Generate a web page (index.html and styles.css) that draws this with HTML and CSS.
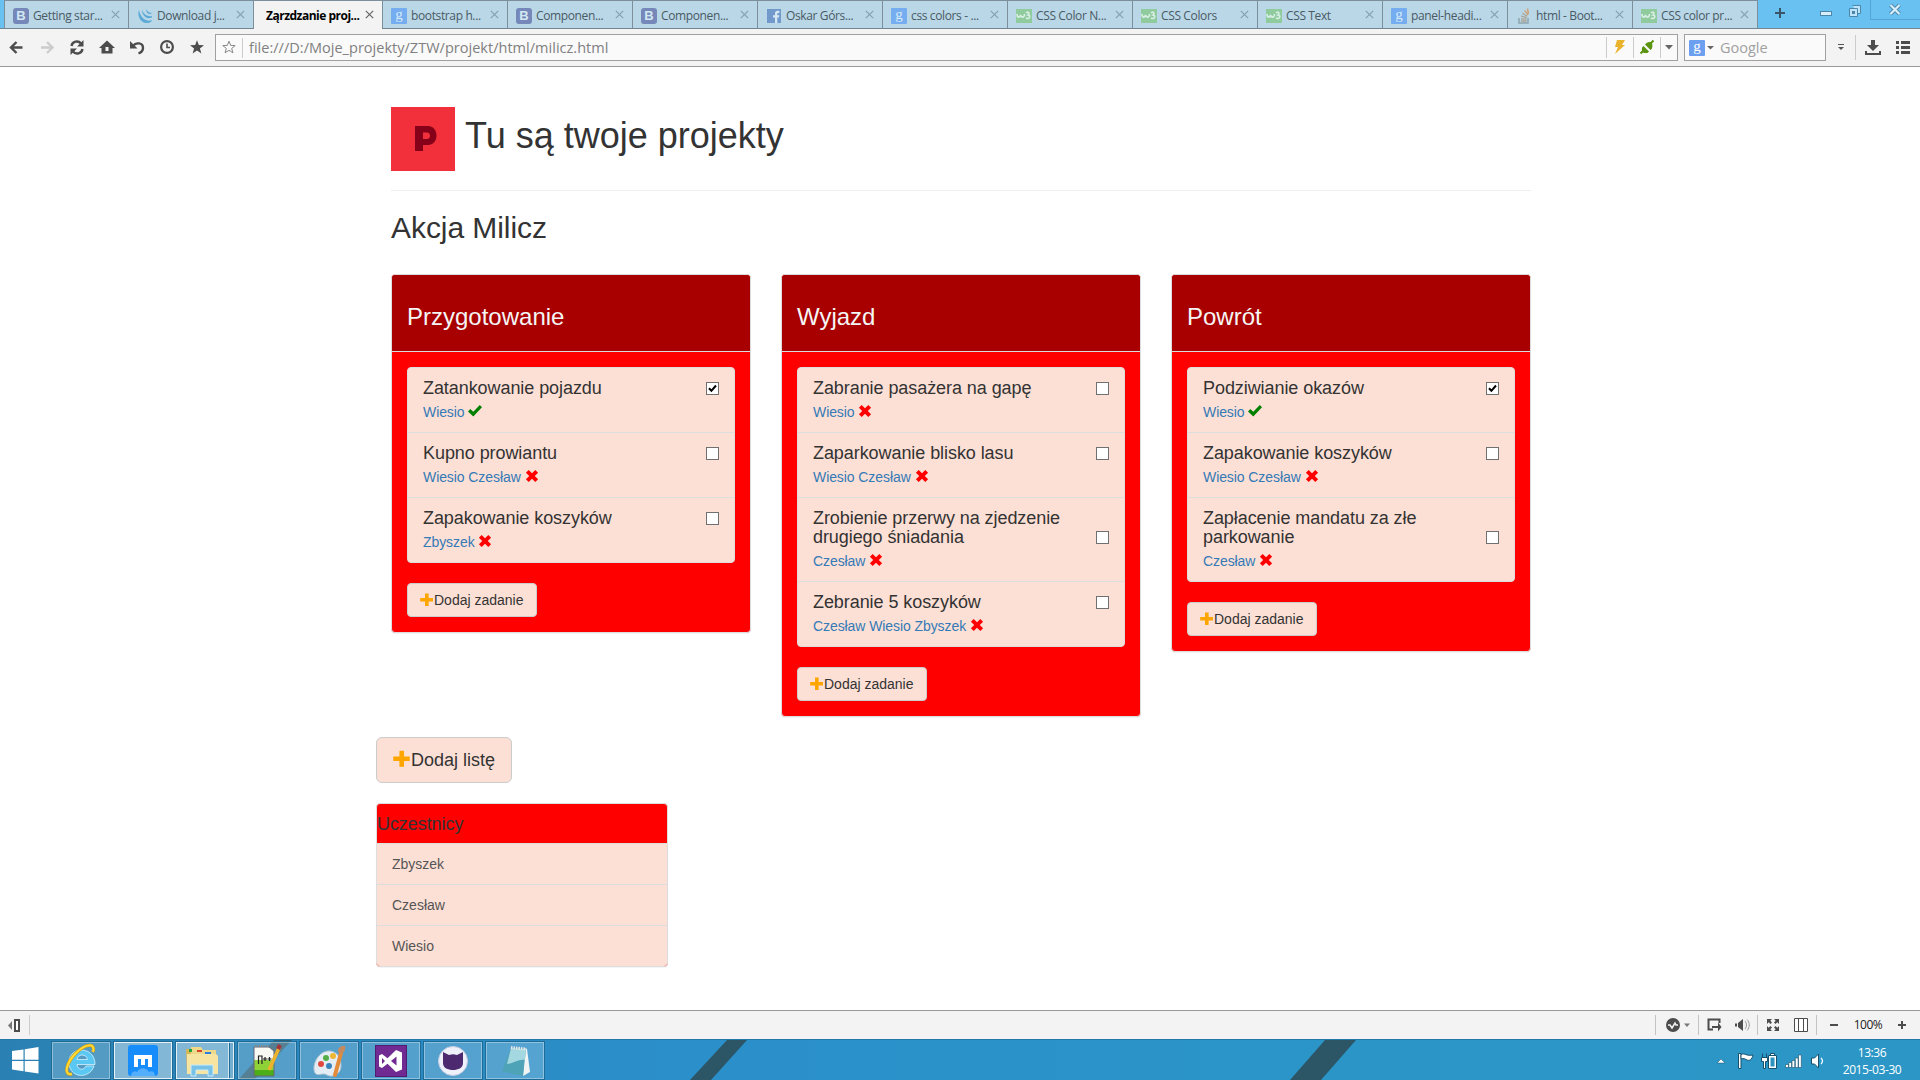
FILE: index.html
```html
<!DOCTYPE html>
<html lang="pl">
<head>
<meta charset="utf-8">
<title>Zarządzanie projektami</title>
<link rel="stylesheet" href="styles.css">
</head>
<body>
<svg class="defs" width="0" height="0">
  <symbol id="fav-jq" viewBox="0 0 16 16"><path d="M2 2C0 7 3 15 10 15c3 0 5-2 5-3-4 2-11 0-13-10zM5 2c0 5 4 9 8 8 2 0 2-1 2-2-4 1-8-1-10-6zM9 1c0 3 2 5 4 5 1 0 2-1 2-1-3 0-5-2-6-4z" fill="#5ba9d6"/></symbol>
  <symbol id="fav-f" viewBox="0 0 16 16"><rect x="1" y="1" width="14" height="14" fill="#7199cc"/><path d="M9 15V9.500H7V7.200h2V5.500C9 3.500 10 2.700 11.600 2.700h1.800v2.200h-1.300c-.6 0-.8.3-.8.9v1.400h2L13 9.500h-1.700V15z" fill="#d5e7f4"/></symbol>
  <symbol id="fav-w3" viewBox="0 0 16 16"><rect y="1" width="16" height="14" fill="#8fcb9d"/><path d="M1 6c0 4 3 4 3.500 1 .5 3 4 3 4-1M10 5c2-2 4 0 2 2 3 0 2 5-2 3" fill="none" stroke="#d9efe6" stroke-width="1.600"/></symbol>
  <symbol id="fav-so" viewBox="0 0 16 16"><path d="M3 10v5h9v-5" fill="none" stroke="#8fa5b0" stroke-width="1.500"/><path d="M5 13h5.500M5 10.800l5.500.4M5.300 8.200l5.300 1.400M6.500 5.300l4.700 2.900" stroke="#aba393" stroke-width="1.300"/><path d="M8.700 2.500l3.300 4.400M11.500.5l1 5.500" stroke="#d0a173" stroke-width="1.400"/></symbol>
  <symbol id="close" viewBox="0 0 9 9"><path d="M.8.8l7.400 7.400M8.200.8L.8 8.200" fill="none" stroke="currentColor" stroke-width="1.200"/></symbol>
  <symbol id="ok" viewBox="0 0 14 14"><path d="M0 7.400L2.300 5l3 2.700L11.800 1 14 3.300 5.300 12.400z" fill="#008000"/></symbol>
  <symbol id="no" viewBox="0 0 14 14"><path d="M.9 3.700L3.700.9 7 4.200 10.300.9l2.800 2.800L9.800 7l3.300 3.300-2.800 2.800L7 9.800l-3.300 3.300-2.800-2.800L4.200 7z" fill="#f00"/></symbol>
  <symbol id="plus" viewBox="0 0 14 14"><path d="M5 .6h3.600V5H13v3.600H8.600V13H5V8.600H.2V5H5z" fill="#ffa500"/></symbol>
  <symbol id="tick" viewBox="0 0 9 9"><path d="M1 4.200l2.400 2.600L8 1.500" fill="none" stroke="#000" stroke-width="2"/></symbol>
</svg>

<header class="chrome">
  <nav class="tabs">
    <div class="tab"><i class="fav letter-b">B</i><span>Getting star...</span><svg class="x"><use href="#close"/></svg></div>
    <div class="tab"><svg class="fav"><use href="#fav-jq"/></svg><span>Download j...</span><svg class="x"><use href="#close"/></svg></div>
    <div class="tab active"><span>Ząrzdzanie proj...</span><svg class="x"><use href="#close"/></svg></div>
    <div class="tab"><i class="fav letter-g">g</i><span>bootstrap h...</span><svg class="x"><use href="#close"/></svg></div>
    <div class="tab"><i class="fav letter-b">B</i><span>Componen...</span><svg class="x"><use href="#close"/></svg></div>
    <div class="tab"><i class="fav letter-b">B</i><span>Componen...</span><svg class="x"><use href="#close"/></svg></div>
    <div class="tab"><svg class="fav"><use href="#fav-f"/></svg><span>Oskar Górs...</span><svg class="x"><use href="#close"/></svg></div>
    <div class="tab"><i class="fav letter-g">g</i><span>css colors - ...</span><svg class="x"><use href="#close"/></svg></div>
    <div class="tab"><svg class="fav"><use href="#fav-w3"/></svg><span>CSS Color N...</span><svg class="x"><use href="#close"/></svg></div>
    <div class="tab"><svg class="fav"><use href="#fav-w3"/></svg><span>CSS Colors</span><svg class="x"><use href="#close"/></svg></div>
    <div class="tab"><svg class="fav"><use href="#fav-w3"/></svg><span>CSS Text</span><svg class="x"><use href="#close"/></svg></div>
    <div class="tab"><i class="fav letter-g">g</i><span>panel-headi...</span><svg class="x"><use href="#close"/></svg></div>
    <div class="tab"><svg class="fav"><use href="#fav-so"/></svg><span>html - Boot...</span><svg class="x"><use href="#close"/></svg></div>
    <div class="tab"><svg class="fav"><use href="#fav-w3"/></svg><span>CSS color pr...</span><svg class="x"><use href="#close"/></svg></div>
    <svg class="window-controls" width="162" height="28" viewBox="0 0 162 28">
      <path d="M17 13h10M22 8v10" stroke="#3a5568" stroke-width="2"/>
      <rect x="62.500" y="11.500" width="11" height="4" fill="#d8eefb" stroke="#4b87ab"/>
      <path d="M94.500 5.500h8v8h-2.500M91.500 8.500h8v8h-8z" fill="#bfe3f8" stroke="#4b87ab"/><rect x="94" y="11" width="3" height="3" fill="#4b87ab"/>
      <path d="M112.500 0v19.500H162" fill="none" stroke="#54a5d3"/>
      <path d="M132.500 5l9 9M141.500 5l-9 9" stroke="#4b87ab" stroke-width="4"/><path d="M132.500 5l9 9M141.500 5l-9 9" stroke="#d8eefb" stroke-width="2.200"/>
    </svg>
  </nav>
  <div class="toolbar">
    <svg class="nav-icons" width="215" height="37" viewBox="0 29 215 37">
      <path d="M22.500 47.500H12M16.500 42l-5.500 5.500 5.500 5.500" fill="none" stroke="#4c4c4c" stroke-width="2.400"/>
      <path d="M41 47.500h10.500M47 42l5.500 5.500L47 53" fill="none" stroke="#ccc" stroke-width="2.400"/>
      <path d="M71.500 46a5.400 5.400 0 0 1 9.500-2.500M82.500 49a5.400 5.400 0 0 1-9.500 2.500" fill="none" stroke="#4c4c4c" stroke-width="2.400"/><path d="M83.500 40v6.500H77zM70.500 55v-6.500H77z" fill="#4c4c4c"/>
      <path d="M107 40.500l8 7.500h-2.500v5.500h-11V48H99z" fill="#4c4c4c"/><rect x="105.500" y="47" width="3" height="4" fill="#f3f3f3"/>
      <path d="M130 41v7.500h7.500z" fill="#4c4c4c"/><path d="M133 46c3-4 10-3.500 10 2 0 2.500-2 4.500-4.500 5.500" fill="none" stroke="#4c4c4c" stroke-width="2.400"/>
      <circle cx="167" cy="47" r="5.900" fill="none" stroke="#4c4c4c" stroke-width="2.200"/><path d="M167 43.500v4h3" fill="none" stroke="#4c4c4c" stroke-width="1.600"/>
      <path d="M197 40.200l1.800 4.900 5.200.2-4.100 3.200 1.500 5-4.400-2.900-4.400 2.900 1.500-5-4.100-3.200 5.200-.2z" fill="#4c4c4c"/>
    </svg>
    <div class="address">
      <svg width="27" height="25" viewBox="0 0 27 25"><path d="M13 6.200l1.700 4.200 4.500.2-3.500 2.800 1.200 4.400-3.900-2.500-3.900 2.500 1.200-4.400-3.500-2.800 4.500-.2z" fill="none" stroke="#888"/><path d="M26.500 3v20" stroke="#ccc"/></svg>
      <span class="url">file:///D:/Moje_projekty/ZTW/projekt/html/milicz.html</span>
      <svg class="end" width="72" height="25" viewBox="0 0 72 25"><path d="M1.500 2v21M28.500 2v21M55.500 2v21" stroke="#ccc"/><path d="M12 5h8l-3 5h3L10 19l3-7h-3z" fill="#e9b32b"/><path d="M35.500 18.500l3-3M45.500 8.500l3-3" stroke="#5b9410" stroke-width="2"/><path d="M37 12.500l1.500-1.500 5.500 5.500-1.500 1.500c-5 .5-6-.5-5.500-5.500zM40 9.500L41.500 8c4.500-2.500 7 0 5.500 5.500L45.500 15z" fill="#5b9410"/><path d="M60 10h8l-4 4.500z" fill="#666"/></svg>
    </div>
    <div class="search">
      <i class="fav letter-g bright">g</i>
      <svg width="10" height="25" viewBox="0 0 10 25"><path d="M2 11h7l-3.500 3.500z" fill="#666"/></svg>
      <span>Google</span>
    </div>
    <svg width="94" height="37" viewBox="0 0 94 37"><path d="M12 15.500h6" stroke="#555"/><path d="M12 18h6l-3 3z" fill="#555"/><path d="M29.500 6v25" stroke="#ccc"/><path d="M45 11h4v5h4l-6 6-6-6h4z" fill="#4c4c4c"/><path d="M40 22v3h14v-3" fill="none" stroke="#4c4c4c" stroke-width="2"/><path d="M70 13.500h3M75 13.500h9M70 18.500h3M75 18.500h9M70 23.500h3M75 23.500h9" stroke="#4c4c4c" stroke-width="3"/></svg>
  </div>
</header>

<main class="page">
  <div class="page-header">
    <svg class="logo" width="64" height="64" viewBox="0 0 64 64"><rect width="64" height="64" fill="#f2303b"/><path d="M24 19h13c5 0 8.500 4 8.500 9.500S42 38 37 38h-5v6h-8zm8 6.500v6.500h4c4 0 4-6.500 0-6.500z" fill="#860019"/></svg>
    <h1>Tu są twoje projekty</h1>
  </div>
  <h2>Akcja Milicz</h2>
  <div class="columns">
    <section class="panel">
      <div class="panel-heading"><h3>Przygotowanie</h3></div>
      <div class="panel-body">
        <ul class="tasks">
          <li><h4><span>Zatankowanie pojazdu</span><i class="check"><svg><use href="#tick"/></svg></i></h4><p>Wiesio <svg class="glyph"><use href="#ok"/></svg></p></li>
          <li><h4><span>Kupno prowiantu</span><i class="check"></i></h4><p>Wiesio Czesław <svg class="glyph"><use href="#no"/></svg></p></li>
          <li><h4><span>Zapakowanie koszyków</span><i class="check"></i></h4><p>Zbyszek <svg class="glyph"><use href="#no"/></svg></p></li>
        </ul>
        <button class="btn"><svg class="glyph"><use href="#plus"/></svg>Dodaj zadanie</button>
      </div>
    </section>
    <section class="panel">
      <div class="panel-heading"><h3>Wyjazd</h3></div>
      <div class="panel-body">
        <ul class="tasks">
          <li><h4><span>Zabranie pasażera na gapę</span><i class="check"></i></h4><p>Wiesio <svg class="glyph"><use href="#no"/></svg></p></li>
          <li><h4><span>Zaparkowanie blisko lasu</span><i class="check"></i></h4><p>Wiesio Czesław <svg class="glyph"><use href="#no"/></svg></p></li>
          <li><h4><span>Zrobienie przerwy na zjedzenie drugiego śniadania</span><i class="check"></i></h4><p>Czesław <svg class="glyph"><use href="#no"/></svg></p></li>
          <li><h4><span>Zebranie 5 koszyków</span><i class="check"></i></h4><p>Czesław Wiesio Zbyszek <svg class="glyph"><use href="#no"/></svg></p></li>
        </ul>
        <button class="btn"><svg class="glyph"><use href="#plus"/></svg>Dodaj zadanie</button>
      </div>
    </section>
    <section class="panel">
      <div class="panel-heading"><h3>Powrót</h3></div>
      <div class="panel-body">
        <ul class="tasks">
          <li><h4><span>Podziwianie okazów</span><i class="check"><svg><use href="#tick"/></svg></i></h4><p>Wiesio <svg class="glyph"><use href="#ok"/></svg></p></li>
          <li><h4><span>Zapakowanie koszyków</span><i class="check"></i></h4><p>Wiesio Czesław <svg class="glyph"><use href="#no"/></svg></p></li>
          <li><h4><span>Zapłacenie mandatu za złe parkowanie</span><i class="check"></i></h4><p>Czesław <svg class="glyph"><use href="#no"/></svg></p></li>
        </ul>
        <button class="btn"><svg class="glyph"><use href="#plus"/></svg>Dodaj zadanie</button>
      </div>
    </section>
  </div>
  <div class="below">
    <button class="btn btn-lg"><svg class="glyph"><use href="#plus"/></svg>Dodaj listę</button>
    <section class="members">
      <h4>Uczestnicy</h4>
      <ul><li>Zbyszek</li><li>Czesław</li><li>Wiesio</li></ul>
    </section>
  </div>
</main>

<footer>
  <div class="statusbar">
    <svg width="31" height="28" viewBox="0 0 31 28"><path d="M12 10v9l-4-4.500z" fill="#777"/><rect x="15" y="9" width="4" height="11" fill="#fff" stroke="#4c4c4c" stroke-width="2"/><path d="M29.500 4v20" stroke="#ccc"/></svg>
    <svg class="status-tools" width="190" height="28" viewBox="0 0 190 28">
      <path d="M.5 4v20M43.500 4v20M102.500 4v20M161.500 4v20" stroke="#c4c4c4"/>
      <circle cx="18" cy="14" r="7" fill="#4c4c4c"/><path d="M13 14h2l2 3 3-5 1 2h2" fill="none" stroke="#f3f3f3" stroke-width="1.500"/><path d="M29 12.500h6l-3 3.500z" fill="#777"/>
      <path d="M58 18.500h-4.500v-10h11V12" fill="none" stroke="#4c4c4c" stroke-width="2"/><path d="M57 15h6v-3.500l3.500 4.500-3.500 4.500V17h-6z" fill="#4c4c4c"/>
      <path d="M80 12.500h2v3h-2zM83 12l5-4v12l-5-4z" fill="#4c4c4c"/><path d="M90 10c2 2 2 6 0 8M92 8.500c3 3 3 8 0 11" fill="none" stroke="#999"/>
      <path d="M112 8h5l-1.700 1.700 1.700 1.800-1.500 1.500-1.800-1.700L112 13zM124 8v5l-1.700-1.700-1.800 1.700-1.500-1.500 1.700-1.800L119 8zM112 20v-5l1.700 1.700 1.800-1.700 1.500 1.500-1.700 1.800L117 20zM124 20h-5l1.700-1.700-1.700-1.800 1.500-1.500 1.800 1.700L124 15z" fill="#4c4c4c"/>
      <path d="M139.500 7.500h13v13h-13zM143.500 8v12M148.500 8v12" fill="#fff" stroke="#4c4c4c"/>
      <path d="M175 14h8" stroke="#4c4c4c" stroke-width="2"/>
    </svg>
    <span class="zoom">100%</span>
    <svg class="zoom-in" width="8" height="8" viewBox="0 0 8 8"><path d="M0 4h8M4 0v8" stroke="#4c4c4c" stroke-width="2"/></svg>
  </div>
  <div class="taskbar">
    <svg class="wallpaper" width="1920" height="40" viewBox="0 0 1920 40"><g fill="#2c5666"><path d="M727 0h20l-36 40h-21zM1325 0h31l-35 40h-31z"/><path d="M274 0h18l-38 40h-16z" opacity=".8"/></g></svg>
    <div class="start"><svg width="27" height="27" viewBox="0 0 27 27"><path d="M0 4l11.500-1.600v10.300H0zM12.700 2.200L26.500 0v12.700H12.700zM0 13.900h11.500v10.300L0 22.600zM12.700 13.900h13.800v12.700L12.700 24.400z" fill="#fff"/></svg></div>
    <div class="app"><svg width="36" height="36" viewBox="0 0 36 36"><path d="M31 23c-4 13-24 13-25-3C5 3 32 2 32 21.500H14c1 6 7 6 9 1.500zM14 16.500h10.500c-1-6-9.500-6-10.500 0z" fill="#5bc8f3" stroke="#d5f4ff" stroke-width=".8" fill-rule="evenodd"/><path d="M9 31C0 33 3 20 13 10S33 0 30 9" fill="none" stroke="#d99d10" stroke-width="3.200"/><path d="M9 31C0 33 3 20 13 10S33 0 30 9" fill="none" stroke="#ffdc35" stroke-width="2"/></svg></div>
    <div class="app lit"><svg width="36" height="36" viewBox="0 0 36 36"><rect x="3" y="2" width="30" height="31" rx="3" fill="#168dfb"/><path d="M6 33c0-4 4-6 6-4 3-5 9-5 12 0 3-2 6 0 6 4z" fill="#55aefb"/><path d="M9 12h18v12h-4v-8h-3v6h-4v-6h-3v8H9z" fill="#fff"/></svg></div>
    <div class="app lit stack"><svg width="36" height="36" viewBox="0 0 36 36"><path d="M2 6h8l2 3h16l2 2v20H3z" fill="#d8b654"/><path d="M7 4h10l2 3h13v24H6z" fill="#eed98a"/><path d="M3 11h29l2 2v18H3z" fill="#f6e4a0"/><path d="M5 6h3v3H5z" fill="#27a33b"/><path d="M13 7h5v2h-5z" fill="#d9442b"/><path d="M21 9h6v2h-6z" fill="#2b7ddb"/><path d="M7 33V22h22v11h-5v-6H12v6z" fill="#79c2e7" stroke="#c9ecfa"/></svg></div>
    <div class="app"><svg width="36" height="36" viewBox="0 0 36 36"><path d="M5 4h15l5 4v25H5z" fill="#f7f9f2"/><path d="M5 17h20v16H5z" fill="#8fd238"/><path d="M5 27h20v6H5z" fill="#4caf18"/><path d="M5 4h15l5 4v25H5z" fill="none" stroke="#667"/><path d="M6 3h14" stroke="#888" stroke-width="2" stroke-dasharray="1 1"/><path d="M9.500 21v-8h3.500v8M14 16h4M16 14v4M18.500 16h4M20.500 14v4" fill="none" stroke="#222" stroke-width="1.200"/><path d="M30 5L20 27" stroke="#edb32c" stroke-width="3.500"/><path d="M31 2l-2 4" stroke="#a3343a" stroke-width="4"/></svg></div>
    <div class="app"><svg width="36" height="36" viewBox="0 0 36 36"><path d="M19 8C8 7 0 22 4 30c3 4 8-1 12 2s14 0 14-9S26 9 19 8z" fill="#e4edf3" stroke="#adc3d1"/><circle cx="10" cy="21" r="3" fill="#e1493e"/><circle cx="15" cy="15" r="3" fill="#52ad47"/><circle cx="22" cy="13" r="3" fill="#efb634"/><circle cx="18" cy="23" r="3" fill="#3984bd"/><path d="M30 10l-6 22" stroke="#e38b38" stroke-width="4" stroke-linecap="round"/><path d="M27 9c-1-3 3-7 7-6 1 3-1 7-4 8z" fill="#c58b5e"/></svg></div>
    <div class="app"><svg width="36" height="36" viewBox="0 0 36 36"><rect x="2.500" y="2.500" width="31" height="31" fill="#702a91" stroke="#511c70"/><path d="M23 7l6 2.500v17L23 29l-8.500-8.200L9 25l-3-1.500v-11L9 11l5.500 4.200zM9 15v6l3-3zM23.500 13.500L18 18l5.500 4.500z" fill="#fff" fill-rule="evenodd"/></svg></div>
    <div class="app"><svg width="36" height="36" viewBox="0 0 36 36"><circle cx="18" cy="18" r="14.500" fill="#eef1fa" stroke="#c4cbe3"/><path d="M8 9l6 3c3-1 5-1 8 0l6-3v11c0 5-5 7-10 7S8 25 8 20z" fill="#4d2a70"/></svg></div>
    <div class="app"><svg width="36" height="36" viewBox="0 0 36 36"><path d="M28 5l2 1 3 23-7 4z" fill="#f0f4f4"/><path d="M14 5l15 1-3 27-21-5z" fill="#4fa3b6"/><path d="M14 5l15 1-1 11c-7-1-12 4-18 4z" fill="#a3d8e0"/><path d="M14 4.500l15 1.500" stroke="#e6e6e6" stroke-width="3" stroke-dasharray="1.500 1"/></svg></div>
    <svg class="tray" width="108" height="24" viewBox="0 0 108 24">
      <path d="M1 14h8l-4-4z" fill="#fff" stroke="#17506c" stroke-width=".5"/>
      <g stroke="#17506c"><path d="M22.500 4.500h2.500v15h-2.500z" fill="#fff"/><path d="M25 5.500c4-2 5 2 12 .5-1 5-4 6-6 5s-3-2-6-1z" fill="#fff"/>
      <path d="M52.500 6.500h8v13h-8zM54.500 4.500h4v2h-4z" fill="#fff"/><path d="M45.500 8.500h6v4h-2v7h-2v-7h-2zM46.500 4.500v4M50.500 4.500v4" fill="#fff"/></g><rect x="54.500" y="8.500" width="4" height="9" fill="#2c92bf"/>
      <path d="M69.500 15.500h3v3h-3zM72.800 13.500h2.800v5h-2.800zM76 11.500h2.800v7H76zM79.300 9h2.800v9.500h-2.800zM82.500 6h2.800v12.500h-2.800z" fill="#fff" stroke="#17506c" stroke-width=".6"/>
      <path d="M95.500 9h3l4-4v14l-4-4h-3z" fill="#fff" stroke="#17506c"/><path d="M105 9c2 2 2 4 0 6" fill="none" stroke="#fff" stroke-width="1.200"/>
    </svg>
    <div class="clock"><span>13:36</span><span>2015-03-30</span></div>
  </div>
</footer>
</body>
</html>
```
FILE: styles.css
```css
* { box-sizing: border-box; }
body {
  margin: 0;
  height: 1080px;
  overflow: hidden;
  display: flex;
  flex-direction: column;
  background: #fff;
  color: #333;
  font: 14px/20px "Liberation Sans", Arial, sans-serif;
}
h1, h2, h3, h4, p, ul { margin: 0; padding: 0; font-weight: 400; }
ul { list-style: none; }
svg { flex: none; display: block; }
.defs { position: absolute; }

/* browser chrome */
.chrome { flex: none; height: 67px; background: #f3f3f3; border-bottom: 1px solid #999; font-family: "Open Sans", sans-serif; }
.tabs {
  display: flex;
  height: 29px;
  padding-left: 4px;
  background: #69c1f1;
  border-bottom: 1px solid #738692;
}
.tab {
  display: flex;
  align-items: center;
  width: 125px;
  height: 28px;
  padding: 2px 8px 0 8px;
  border: 1px solid #7c8f9b;
  border-width: 1px 0 0 1px;
  background: #b9d7e7;
  color: #4a5a64;
  font-size: 12px;
  letter-spacing: -0.37px;
  white-space: nowrap;
}
.tab:first-child { width: 124px; }
.fav { flex: none; width: 16px; height: 16px; }
.tab .fav { margin-right: 4px; }
.letter-b, .letter-g { text-align: center; font-style: normal; letter-spacing: 0; }
.letter-b { border-radius: 3px; background: #7588b9; color: #d3e7f2; font: 700 13px/16px "Liberation Sans", sans-serif; }
.letter-g { border-radius: 1px; background: #75adf0; color: #d7eaf8; font: 15px/13px "Liberation Serif", serif; }
.letter-g.bright { margin-left: 4px; background: #6c9ff0; color: #fff; }
.tab .x { width: 9px; height: 9px; margin: 0 0 3px auto; color: #84a0b0; }
.tab.active {
  width: 129px;
  height: 29px;
  padding: 2px 8px 1px 12px;
  background: #f3f3f3;
  color: #000;
  font-weight: 700;
  letter-spacing: -0.5px;
}
.tab.active .x { color: #666; }
.tab:nth-child(14) { width: 126px; border-right-width: 1px; }
.window-controls { margin-left: auto; }
.toolbar { display: flex; height: 37px; align-items: center; }
.address, .search { display: flex; align-items: center; height: 27px; border: 1px solid #a0a0a0; background: #fafafa; }
.address { width: 1463px; }
.url { margin-left: 6px; color: #808080; font-size: 14.5px; letter-spacing: 0.02px; }
.address .end { margin-left: auto; }
.search { width: 142px; margin-left: 6px; color: #a0a0a0; font-size: 14.5px; }
.search span { margin-left: 5px; }

/* page */
.page { flex: 1; min-height: 0; width: 1140px; margin-left: 391px; padding-top: 40px; }
.page-header { display: flex; height: 84px; border-bottom: 1px solid #eee; }
.page-header h1 { margin: 9px 0 0 10px; font-size: 36px; line-height: 40px; }
h2 { margin-top: 20px; font-size: 30px; line-height: 33px; letter-spacing: -0.06px; }
.columns { display: grid; grid-template-columns: repeat(3, 360px); gap: 30px; align-items: start; margin-top: 30px; }
.panel { border: 1px solid #ddd; border-radius: 4px; background: #f00; box-shadow: 0 1px 1px rgba(0, 0, 0, .05); }
.panel-heading { padding: 29px 15px 21px; border-bottom: 1px solid #ddd; border-radius: 3px 3px 0 0; background: #a80000; color: #f5f5f5; }
h3 { font-size: 24px; line-height: 26px; }
h4 { font-size: 18px; line-height: 19px; letter-spacing: -0.07px; }
.panel-body { padding: 15px; }
.tasks { border: 1px solid #ddd; border-radius: 4px; background: #fde0d5; }
.tasks li { padding: 11px 15px 10px; }
.tasks li + li { border-top: 1px solid #ddd; }
.tasks h4 { display: flex; align-items: flex-end; justify-content: space-between; margin-bottom: 4px; }
.tasks h4 span { max-width: 252px; }
.tasks p { color: #337ab7; letter-spacing: -0.08px; }
.glyph { display: inline-block; width: 14px; height: 14px; vertical-align: -2px; }
.tasks .glyph { vertical-align: -1px; }
.check { flex: none; width: 13px; height: 13px; margin-bottom: 3px; padding: 1px; border: 1px solid #707070; background: #fff; }
.check svg { width: 9px; height: 9px; }
.btn {
  display: flex;
  align-items: center;
  height: 34px;
  margin-top: 20px;
  padding: 0 12px;
  border: 1px solid #ccc;
  border-radius: 4px;
  background: #fde0d5;
  color: #333;
  font: inherit;
}
.below { margin: 20px 0 0 -15px; }
.btn-lg { height: 46px; margin: 0; padding: 0 16px; border-radius: 6px; font-size: 18px; }
.btn .glyph { margin-top: -1px; }
.btn-lg .glyph { width: 18px; height: 18px; margin-top: -2px; }
.members { width: 292px; margin-top: 20px; border: 1px solid #ddd; border-radius: 4px; background: #f00; box-shadow: 0 1px 1px rgba(0, 0, 0, .05); }
.members h4 { padding: 11px 0 9px; }
.members li { height: 41px; padding: 10px 15px; border-top: 1px solid #ddd; background: #fde0d5; color: #555; }
.members li:last-child { border-radius: 0 0 3px 3px; }

/* status bar and taskbar */
footer { flex: none; font-family: "Open Sans", sans-serif; }
.statusbar { display: flex; align-items: center; height: 29px; border-top: 1px solid #999; background: #f3f3f3; }
.status-tools { margin-left: auto; }
.zoom { width: 38px; margin-left: 4px; text-align: center; color: #222; font-size: 12px; letter-spacing: -0.5px; }
.zoom-in { margin: 0 14px 0 11px; }
.taskbar {
  position: relative;
  display: flex;
  height: 41px;
  padding-top: 1px;
  border-top: 1px solid #2279a8;
  background: linear-gradient(90deg, #2a80b2, #2b8fca 35%, #2b95c8 70%, #2c97c6);
}
.wallpaper { position: absolute; left: 0; top: 0; }
.start, .app, .tray, .clock { position: relative; }
.start { width: 51px; padding: 6px 0 0 12px; }
.app {
  display: flex;
  align-items: center;
  justify-content: center;
  width: 60px;
  height: 39px;
  margin-right: 2px;
  border: 1px solid #1d6c98;
  box-shadow: inset 0 0 0 1px rgba(255, 255, 255, .35);
  background: rgba(255, 255, 255, .2);
}
.app.lit { background: rgba(255, 255, 255, .42); box-shadow: inset 0 0 0 1px rgba(255, 255, 255, .8); }
.app.stack { padding-right: 6px; box-shadow: inset 0 0 0 1px rgba(255, 255, 255, .8), inset -4px 0 0 #73aed0, inset -5px 0 0 #1d6c98, inset -6px 0 0 #d2e5ef; }
.tray { margin: 8px 0 0 auto; }
.clock { display: flex; flex-direction: column; width: 96px; padding-top: 3px; text-align: center; color: #fff; font-size: 12px; line-height: 17px; letter-spacing: -0.4px; }
```
